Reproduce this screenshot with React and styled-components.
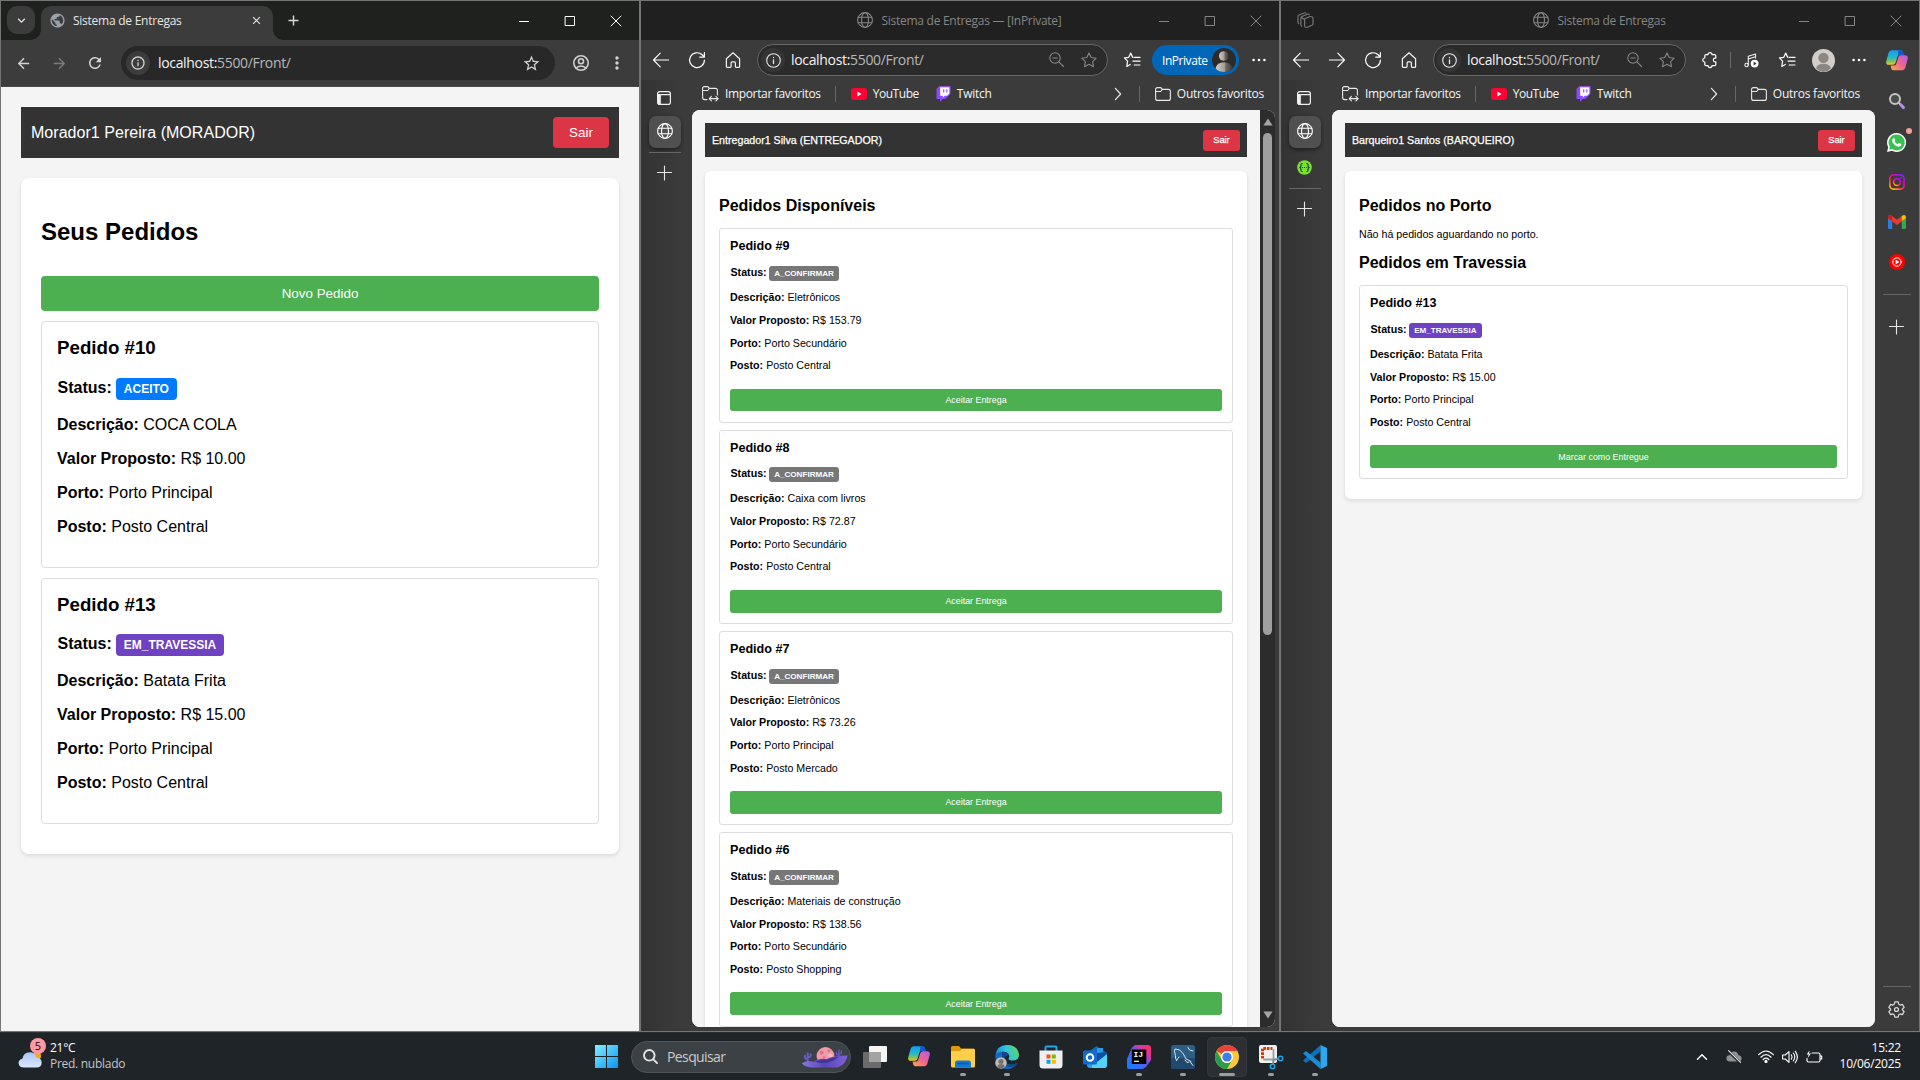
import React from "react";
import styled, { createGlobalStyle, ThemeProvider, css } from "styled-components";
import {
  MdArrowBack,
  MdArrowForward,
  MdRefresh,
  MdInfoOutline,
  MdStarBorder,
  MdMoreVert,
  MdPublic,
  MdClose,
  MdAdd,
  MdKeyboardArrowDown,
} from "react-icons/md";

const uiFont = '"Open Sans", "Noto Sans", sans-serif';
const pageFont = '"Liberation Sans", Arial, sans-serif';

const Global = createGlobalStyle`
  *, *::before, *::after { box-sizing: border-box; }
  body { margin: 0; background: #1f2327; overflow: hidden; }
`;

/* ---------- page metrics at 100% and 67% browser zoom ---------- */

const fullZoom = {
  font: 16, h2: 24, h3: 18.72, button: 13.4, badge: 12,
  pad: "20px 20px", barHeight: 51, barPad: "0 10px 0 10px", barGap: 20, barSpacing: 0.04, stroke: 0,
  exitW: 56, exitH: 31, exitFont: 13.4,
  boxPad: "0 20px 30px", boxTop: 39, h2Height: 29,
  cardPad: "15px 15px 23px", h3Height: 22, statusGap: 8.5, statusHeight: 40, row: 34, statusIndent: 0.5,
  badgeH: 22, badgePad: 7.8, badgeGap: 4.3, actionH: 35, actionGap: 0, cardGap: 10, radius: 8, small: 4,
};

const smallZoom = {
  font: 10.67, h2: 16, h3: 12.6, button: 8.9, badge: 8.1,
  pad: "13px 13px", barHeight: 34, barPad: "0 7px 0 7px", barGap: 14, barSpacing: 0, stroke: 0.25,
  exitW: 37, exitH: 21, exitFont: 9.2,
  boxPad: "0 14px 20px", boxTop: 26, h2Height: 18,
  cardPad: "10px 10px 10.5px", h3Height: 14, statusGap: 5.6, statusHeight: 27.3, row: 22.67, statusIndent: 0.5,
  badgeH: 15, badgePad: 5, badgeGap: 2.5, actionH: 22.67, actionGap: 11.8, cardGap: 6.8, radius: 6, small: 3,
};

const px = (key) => ({ theme }) => `${theme[key]}px`;

/* ---------- desktop ---------- */

const Desktop = styled.div`
  width: 1920px;
  height: 1080px;
  display: grid;
  grid-template-rows: 1032px 48px;
  font-family: ${uiFont};
  overflow: hidden;
`;

const Windows = styled.div`
  display: grid;
  grid-template-columns: repeat(3, 640px);
`;

const Window = styled.section`
  display: flex;
  flex-direction: column;
  height: 1032px;
  min-width: 0;
  border: 1px solid #757575;
  background: ${(p) => p.$bg};
  overflow: hidden;
`;

const Svg = styled.svg`
  display: block;
  flex: none;
  width: ${(p) => p.$w || 20}px;
  height: ${(p) => p.$h || p.$w || 20}px;
  fill: none;
  stroke: ${(p) => p.$c || "none"};
  stroke-width: ${(p) => p.$sw || 1.1};
  stroke-linecap: round;
  stroke-linejoin: round;
  overflow: visible;
`;

const Slot = styled.span`
  flex: none;
  width: ${(p) => p.$w || 36}px;
  height: ${(p) => (p.$h ? `${p.$h}px` : "auto")};
  display: flex;
  align-items: center;
  justify-content: center;
  color: ${(p) => p.$c || "#d4d4d4"};
`;

const Spacer = styled.span`
  flex: 1;
`;

/* ---------- generic glyphs ---------- */

const ControlsRow = styled.div`
  display: flex;
  height: 39px;
  justify-self: end;
`;

function Controls({ color }) {
  return (
    <ControlsRow>
      <Slot $w={46}><Svg $w={10} $c={color} $sw={1} viewBox="0 0 10 10"><path d="M0 5.5H10" strokeLinecap="butt" /></Svg></Slot>
      <Slot $w={46}><Svg $w={10} $c={color} $sw={1} viewBox="0 0 10 10"><path d="M.5.5h9v9h-9z" /></Svg></Slot>
      <Slot $w={46}><Svg $w={10} $c={color} $sw={1} viewBox="0 0 10 10"><path d="M0 0L10 10M10 0L0 10" /></Svg></Slot>
    </ControlsRow>
  );
}

const Globe = ({ c = "#fff", w = 16 }) => (
  <Svg $w={w} $c={c} $sw={1.1} viewBox="0 0 16 16">
    <circle cx="8" cy="8" r="7.4" />
    <ellipse cx="8" cy="8" rx="3.5" ry="7.4" />
    <path d="M1.2 5.3h13.6M1.2 10.7h13.6" />
  </Svg>
);
const BackArrow = () => <Svg $w={16} $c="#fff" viewBox="0 0 16 16"><path d="M15.6 8H.6M7.2 1.2L.5 8l6.7 6.8" /></Svg>;
const NextArrow = () => <Svg $w={16} $c="#fff" viewBox="0 0 16 16"><path d="M.4 8h15M8.8 1.2L15.5 8l-6.7 6.8" /></Svg>;
const Reload = () => <Svg $w={16} $c="#fff" $sw={1.2} viewBox="0 0 16 16"><path d="M15.4 8.2a7.4 7.4 0 1 1-2.3-5.4l2.1 2M15.4.5v4.6h-4.7" /></Svg>;
const Home = () => <Svg $w={16} $c="#f2f2f2" $sw={1.2} viewBox="0 0 16 16"><path d="M1.4 6.8L8 .8l6.6 6v7.6q0 1-1 1h-2.4q-.8 0-.8-.8v-3.7q0-1-1-1H7.1q-1 0-1 1v3.7q0 .8-.8.8H2.4q-1 0-1-1z" /></Svg>;
const Info = () => <Svg $w={15} $c="#e8e8e8" $sw={1.1} viewBox="0 0 15 15"><circle cx="7.5" cy="7.5" r="6.8" /><path d="M7.5 6.8v3.8M7.5 4.4v.3" strokeWidth="1.3" /></Svg>;
const Magnifier = () => <Svg $w={15} $c="#868686" viewBox="0 0 15 15"><circle cx="6" cy="6" r="5.2" /><path d="M9.9 9.9l4.6 4.6M3.8 6h4.4" /></Svg>;
const starPath = "M8 .9l2.2 4.6 5 .7-3.6 3.5.9 5L8 12.3l-4.5 2.4.9-5L.8 6.2l5-.7z";
const Star = () => <Svg $w={16} $c="#868686" viewBox="0 0 16 16"><path d={starPath} /></Svg>;
const StarList = () => (
  <Svg $w={16} $c="#fff" $sw={1.2} viewBox="0 0 16 16">
    <path d="M8.6 5.2L6.7 1.1 4.8 5.3l-4.3.6 3.1 3.2-.8 5.3 3.4-2M10.2 5.4H16M9 9.2h7M10.2 13H16M6.7 1.1L8.8 5.3" />
  </Svg>
);
const Dots = () => <Svg $w={14} $h={4} viewBox="0 0 14 4"><g fill="#fff"><circle cx="1.6" cy="2" r="1.3" /><circle cx="7" cy="2" r="1.3" /><circle cx="12.4" cy="2" r="1.3" /></g></Svg>;
const Plus = () => <Svg $w={14} $c="#e6e6e6" $sw={1.1} viewBox="0 0 14 14"><path d="M6.5 0v14M-.5 6.5h14" /></Svg>;
const TabsIcon = () => <Svg $w={14} $c="#efefef" $sw={1.2} viewBox="1 0 14 14"><rect x=".6" y=".6" width="12.8" height="12.8" rx="2.2" /><path d="M.6 3.6h12.8" /><path d="M.8 3.6h2.8v9.7H2q-1.2 0-1.2-1.2z" fill="#efefef" strokeWidth=".6" /></Svg>;
const Folder = () => <Svg $w={16} $h={14} $c="#e8e8e8" viewBox="0 0 16 14"><path d="M.6 2.6q0-2 2-2h2.8q.8 0 1.2.8l.6 1h6.2q2 0 2 2v7q0 2-2 2H2.6q-2 0-2-2zM.8 4.5h3.9q.9 0 1.5-.7l1-1.3" /></Svg>;
const FolderImport = () => (
  <Svg $w={17} $h={15} $c="#e8e8e8" viewBox="0 0 17 15">
    <path d="M5 13.6H2.6q-2 0-2-2v-9q0-2 2-2h2.8q.8 0 1.2.8l.6 1h6.2q2 0 2 2V9M.8 4.5h3.9q.9 0 1.5-.7l1-1.3M7.4 12.6h8.4M9.4 10.4l-2.2 2.2 2.2 2.2M13.9 10.4l2.2 2.2-2.2 2.2" />
  </Svg>
);
const ChevronRight = () => <Svg $w={6} $h={12} $c="#e8e8e8" $sw={1.2} viewBox="0 0 6 12"><path d="M.4.3L5.6 6 .4 11.7" /></Svg>;
const YouTube = () => <Svg $w={16} $h={12} viewBox="0 0 16 12"><rect width="16" height="12" rx="3" fill="#ff0033" /><path d="M6.4 3.6v4.8L10.6 6z" fill="#fff" /></Svg>;
const Twitch = () => (
  <Svg $w={15} $h={16} viewBox="0 0 15 16">
    <path d="M3.4 0L.5 2.9v10.2H4V16l2.9-2.9h2.4l5.2-5.2V0z" fill="#9147ff" />
    <path d="M4.2 1.2h9.2v6.2l-2.3 2.3H8.8l-2 2v-2H4.2z" fill="#fff" />
    <path d="M7.2 3.2h1.1v3.4H7.2zM10.3 3.2h1.1v3.4h-1.1z" fill="#9147ff" />
  </Svg>
);
const Puzzle = () => <Svg $w={16} $c="#fff" $sw={1.2} viewBox="0 0 16 16"><path d="M6 2.6a2 2 0 0 1 4 0h2.600q1.200 0 1.200 1.200v2.300h-.6a1.900 1.900 0 0 0 0 3.800h.6v2.500q0 1.200-1.200 1.200H10a2 2 0 0 1-4 0H4q-1.200 0-1.200-1.200V10a2 2 0 0 1 0-4V3.800q0-1.200 1.200-1.200z" /></Svg>;
const Music = () => (
  <Svg $w={15} $c="#f0f0f0" viewBox="0 0 15 15">
    <circle cx="2.6" cy="12" r="1.7" /><path d="M4.3 12V3.3L11.5 1v4M4.3 6l7.2-2.3" /><circle cx="10.6" cy="10.6" r="3.9" fill="#fff" stroke="none" /><path d="M9.6 8.7v3.8l3.1-1.9z" fill="#3b3b3b" stroke="none" />
  </Svg>
);
const Avatar = ({ w = 22, bg = "#d2cfca", fg = "#8c8782" }) => (
  <Svg $w={w} viewBox="0 0 24 24">
    <circle cx="12" cy="12" r="12" fill={bg} /><circle cx="12" cy="9.2" r="5.4" fill={fg} /><path d="M4.2 20.2q1.2-4.7 7.8-4.7t7.8 4.7A12 12 0 0 1 12 24a12 12 0 0 1-7.8-3.8z" fill={fg} />
  </Svg>
);
const PrivateAvatar = () => (
  <Svg $w={24} viewBox="0 0 24 24">
    <defs><linearGradient id="pa"><stop stopColor="#d5d0c8" /><stop offset=".55" stopColor="#a09a92" /><stop offset=".6" stopColor="#6f6a66" /><stop offset="1" stopColor="#3f3c3a" /></linearGradient></defs>
    <circle cx="12" cy="12" r="12" fill="#2d2b2a" /><circle cx="11.8" cy="8" r="4.8" fill="url(#pa)" /><path d="M3.5 20.4Q5 14.2 12 14.2t8.4 6.2A12 12 0 0 1 12 24a12 12 0 0 1-8.5-3.6z" fill="url(#pa)" />
  </Svg>
);
const Copilot = ({ w = 22, id }) => (
  <Svg $w={w} $h={w * 0.93} viewBox="0 0 24 22">
    <defs>
      <linearGradient id={`${id}a`} x1="0" y1="0" x2="0" y2="1"><stop stopColor="#129df0" /><stop offset=".5" stopColor="#24b8c8" /><stop offset=".8" stopColor="#8bc34a" /><stop offset="1" stopColor="#f6c433" /></linearGradient>
      <linearGradient id={`${id}b`} x1="1" y1="0" x2="0" y2="1"><stop stopColor="#b05bf5" /><stop offset=".5" stopColor="#f0638d" /><stop offset="1" stopColor="#ffa94a" /></linearGradient>
    </defs>
    <path d="M6.5 0h9q2 0 2.8 2.1l.9 3H15q-2 0-2.600 2l-2 6.600q-.7 2.300-3 2.300H3.400q-4.100 0-3.100-4L2.700 3.400Q3.600 0 6.500 0z" fill={`url(#${id}a)`} />
    <path d="M13.500 0h2.200q2 0 2.600 2.100l.9 3h-4q-1.700 0-2.300 1.600z" fill="#1554d1" />
    <path d="M17.500 22h-9q-2 0-2.800-2.100L5 16.800h3.500q2 0 2.700-2l2.200-7.100q.7-2.200 3-2.200h4q4.200 0 3.300 4l-2.400 9q-.9 3.500-3.800 3.500z" fill={`url(#${id}b)`} />
  </Svg>
);

/* ---------- Chrome ---------- */

const ChromeTabs = styled.header`
  display: grid;
  grid-template-columns: auto auto auto 1fr;
  height: 39px;
  padding-left: 6px;
  background: #1f211f;
`;
const TabSearch = styled.button`
  width: 28px;
  height: 28px;
  margin: 5px 6px 0 0;
  padding: 0;
  display: grid;
  place-items: center;
  border: 0;
  border-radius: 10px;
  background: #3c3c3c;
  color: #e6e6e6;
`;
const ChromeTab = styled.div`
  position: relative;
  width: 232px;
  height: 34px;
  margin-top: 5px;
  padding: 0 10px 6px 8px;
  display: flex;
  align-items: center;
  border-radius: 10px 10px 0 0;
  background: #3c3c3c;
  color: #e6e6e6;
  font-size: 12px;
  letter-spacing: -0.25px;
  &::before, &::after {
    content: "";
    position: absolute;
    bottom: 0;
    width: 10px;
    height: 10px;
  }
  &::before { left: -10px; background: radial-gradient(circle at 0 0, transparent 9.5px, #3c3c3c 10px); }
  &::after { right: -10px; background: radial-gradient(circle at 100% 0, transparent 9.5px, #3c3c3c 10px); }
  span { margin-left: 7px; flex: 1; white-space: nowrap; }
`;
const NewTab = styled.span`
  width: 40px;
  height: 38px;
  display: grid;
  place-items: center;
  color: #d9d9d9;
`;
const ChromeBar = styled.nav`
  height: 47px;
  flex: none;
  display: flex;
  align-items: center;
  padding: 0 4px;
  background: #3c3c3c;
  border-bottom: 1px solid #4a4a4a;
`;
const Omnibox = styled.div`
  flex: 1;
  height: 34px;
  margin: 0 8px;
  padding: 0 14px 0 5px;
  display: flex;
  align-items: center;
  gap: 8px;
  border-radius: 17px;
  background: #282828;
  color: #d0d0d0;
`;
const InfoDot = styled.span`
  width: 24px;
  height: 24px;
  display: grid;
  place-items: center;
  border-radius: 50%;
  background: ${(p) => p.$bg};
`;
const Url = styled.span`
  flex: 1;
  padding-bottom: 1px;
  color: #b8b8b8;
  font-size: 14px;
  letter-spacing: -0.33px;
  white-space: nowrap;
  b { font-weight: 400; color: #f3f3f3; }
`;

/* ---------- Edge ---------- */

const EdgeTitle = styled.header`
  flex: none;
  height: 39px;
  display: grid;
  grid-template-columns: 1fr auto 1fr;
  align-items: center;
  background: #202020;
  color: #858585;
  font-size: 12px;
`;
const Caption = styled.div`
  display: flex;
  align-items: center;
  gap: 8px;
  padding: 0 1px 1px 0;
  letter-spacing: -0.27px;
  white-space: nowrap;
`;
const WorkspaceSlot = styled.span`
  padding-left: 16px;
`;
const EdgeBar = styled.nav`
  flex: none;
  height: 40px;
  display: flex;
  align-items: center;
  padding: 0 2px;
`;
const AddressPill = styled.div`
  flex: ${(p) => (p.$w ? "none" : 1)};
  width: ${(p) => (p.$w ? `${p.$w}px` : "auto")};
  height: 32px;
  margin: 0 6px;
  padding: 0 10px 0 3px;
  display: flex;
  align-items: center;
  gap: 6px;
  border: 1px solid #666;
  border-radius: 16px;
  background: #2b2b2b;
`;
const PillIcons = styled.span`
  display: flex;
  gap: 17px;
`;
const InPrivate = styled.div`
  width: 87px;
  height: 30px;
  margin: 0 2px;
  padding: 0 3px 0 10px;
  display: flex;
  align-items: center;
  justify-content: space-between;
  border-radius: 15px;
  background: #0067b8;
  color: #fff;
  font-size: 12px;
  letter-spacing: -0.45px;
`;
const Divider = styled.span`
  flex: none;
  width: 1px;
  height: 16px;
  background: #666;
`;
const EdgeBody = styled.div`
  flex: 1;
  min-height: 0;
  display: grid;
  grid-template-columns: 51px minmax(0, 1fr) ${(p) => p.$side}px;
  grid-template-rows: minmax(0, 1fr);
`;
const Strip = styled.aside`
  display: flex;
  flex-direction: column;
  align-items: center;
  padding: 9px 4px 0 0;
  background: linear-gradient(90deg, #333 0, #3b3b3b 40px);
`;
const ActiveTab = styled.span`
  width: 32px;
  height: 32px;
  margin: 9px 0 4px;
  padding-bottom: 2px;
  display: grid;
  place-items: center;
  border-radius: 7px;
  background: #505050;
  box-shadow: 0 2px 4px rgba(0, 0, 0, 0.45);
`;
const HLine = styled.span`
  width: ${(p) => p.$w || 32}px;
  height: 1px;
  flex: none;
  background: #666;
`;
const EdgeMain = styled.div`
  display: grid;
  grid-template-rows: 30px minmax(0, 1fr);
  min-height: 0;
  padding-bottom: 4px;
`;
const Bookmarks = styled.div`
  display: flex;
  align-items: center;
  padding: 0 ${(p) => p.$right}px 3px 10px;
  color: #f5f5f5;
  font-size: 12px;
  white-space: nowrap;
`;
const Bookmark = styled.span`
  display: flex;
  align-items: center;
  gap: 6px;
  letter-spacing: ${(p) => p.$ls}px;
`;
const Gap = styled.span`
  flex: none;
  width: ${(p) => p.$w}px;
`;
const Viewport = styled.div`
  display: flex;
  min-height: 0;
  border-radius: 8px;
  overflow: hidden;
  background: #f4f4f4;
`;
const Scrollbar = styled.div`
  width: 15px;
  flex: none;
  display: flex;
  flex-direction: column;
  align-items: center;
  padding: 8px 0;
  background: #2c2c2c;
`;
const Thumb = styled.div`
  width: 9px;
  height: 502px;
  margin-top: 7px;
  border-radius: 5px;
  background: #9f9f9f;
`;
const SideBar = styled.aside`
  display: flex;
  flex-direction: column;
  align-items: center;
  padding-right: 1px;
`;
const SideItem = styled.span`
  position: relative;
  height: ${(p) => p.$h || 40}px;
  flex: none;
  display: grid;
  place-items: center;
`;
const Notice = styled.i`
  position: absolute;
  top: 6px;
  right: -6px;
  width: 6px;
  height: 6px;
  border-radius: 50%;
  background: #f5a19b;
`;

/* ---------- site ---------- */

const Page = styled.main`
  flex: 1;
  min-width: 0;
  min-height: 0;
  overflow: hidden;
  padding: ${({ theme }) => theme.pad};
  background: #f4f4f4;
  color: #000;
  font-family: ${pageFont};
  font-size: ${px("font")};
`;
const UserBar = styled.div`
  height: ${px("barHeight")};
  display: flex;
  align-items: center;
  justify-content: space-between;
  padding: ${({ theme }) => theme.barPad};
  margin-bottom: ${px("barGap")};
  background: #333;
  color: #fff;
  letter-spacing: ${px("barSpacing")};
  -webkit-text-stroke: ${px("stroke")} #fff;
`;
const Exit = styled.button`
  width: ${px("exitW")};
  height: ${px("exitH")};
  padding: 0;
  border: 0;
  border-radius: ${px("small")};
  background: #dc3545;
  color: #fff;
  font: ${({ theme }) => `400 ${theme.exitFont}px ${pageFont}`};
`;
const Box = styled.section`
  padding: ${({ theme }) => theme.boxPad};
  padding-top: ${px("boxTop")};
  border-radius: ${px("radius")};
  background: #fff;
  box-shadow: 0 2px 4px rgba(0, 0, 0, 0.1);
`;
const Heading = styled.h2`
  height: ${px("h2Height")};
  line-height: ${px("h2Height")};
  margin: 0 0 ${(p) => p.$mb}px;
  font-size: ${px("h2")};
  white-space: nowrap;
`;
const Note = styled.p`
  height: 14px;
  line-height: 14px;
  margin: 0 0 13px;
  font-size: 10.67px;
`;
const Action = styled.button`
  display: block;
  width: 100%;
  height: ${px("actionH")};
  padding: 0;
  margin-top: ${(p) => (p.$inCard ? `${p.theme.actionGap}px` : 0)};
  border: 0;
  border-radius: ${px("small")};
  background: #4caf50;
  color: #fff;
  font: ${({ theme }) => `400 ${theme.button}px ${pageFont}`};
`;
const Cards = styled.div`
  display: grid;
  gap: ${px("cardGap")};
  margin-top: ${(p) => p.$mt || 0}px;
`;
const Card = styled.article`
  padding: ${({ theme }) => theme.cardPad};
  border: 1px solid #ddd;
  border-radius: ${px("small")};
  background: #fff;
`;
const CardTitle = styled.h3`
  height: ${px("h3Height")};
  line-height: ${px("h3Height")};
  margin: 0 0 ${px("statusGap")};
  font-size: ${px("h3")};
`;
const Field = styled.div`
  height: ${px("row")};
  line-height: ${px("row")};
  white-space: nowrap;
`;
const StatusField = styled(Field)`
  height: ${px("statusHeight")};
  display: flex;
  align-items: center;
  padding-left: ${px("statusIndent")};
`;
const tones = { A_CONFIRMAR: "#777", ACEITO: "#007bff", EM_TRAVESSIA: "#6f42c1" };
const Badge = styled.span`
  height: ${px("badgeH")};
  line-height: ${px("badgeH")};
  margin: 2px 0 0 ${px("badgeGap")};
  padding: 0 ${px("badgePad")};
  border-radius: ${px("small")};
  background: ${(p) => tones[p.$status]};
  color: #fff;
  font-size: ${px("badge")};
  font-weight: 700;
`;

function Order({ id, status, desc, price, port, post, action }) {
  return (
    <Card>
      <CardTitle>Pedido #{id}</CardTitle>
      <StatusField><b>Status:</b><Badge $status={status}>{status}</Badge></StatusField>
      <Field><b>Descrição:</b> {desc}</Field>
      <Field><b>Valor Proposto:</b> R$ {price}</Field>
      <Field><b>Porto:</b> {port}</Field>
      <Field><b>Posto:</b> {post}</Field>
      {action && <Action $inCard>{action}</Action>}
    </Card>
  );
}

const available = [
  { id: 9, desc: "Eletrônicos", price: "153.79", port: "Porto Secundário", post: "Posto Central" },
  { id: 8, desc: "Caixa com livros", price: "72.87", port: "Porto Secundário", post: "Posto Central" },
  { id: 7, desc: "Eletrônicos", price: "73.26", port: "Porto Principal", post: "Posto Mercado" },
  { id: 6, desc: "Materiais de construção", price: "138.56", port: "Porto Secundário", post: "Posto Shopping" },
];

function ChromeWindow() {
  return (
    <Window $bg="#f4f4f4">
      <ChromeTabs>
        <TabSearch><MdKeyboardArrowDown size={15} /></TabSearch>
        <ChromeTab>
          <MdPublic size={17} color="#9aa0a8" />
          <span>Sistema de Entregas</span>
          <MdClose size={13} />
        </ChromeTab>
        <NewTab><MdAdd size={17} /></NewTab>
        <Controls color="#fff" />
      </ChromeTabs>
      <ChromeBar>
        <Slot><MdArrowBack size={17} /></Slot>
        <Slot $c="#7c7c7c"><MdArrowForward size={17} /></Slot>
        <Slot><MdRefresh size={18} /></Slot>
        <Omnibox>
          <InfoDot $bg="#3c3c3c"><MdInfoOutline size={16} /></InfoDot>
          <Url><b>localhost:</b>5500/Front/</Url>
          <MdStarBorder size={19} />
        </Omnibox>
        <Slot>
          <Svg $w={16} $c="#cfcfcf" $sw={1.6} viewBox="0 0 16 16"><circle cx="8" cy="8" r="7.2" /><circle cx="8" cy="6.3" r="2.5" /><path d="M3.2 13q4.8-4 9.6 0" /></Svg>
        </Slot>
        <Slot><MdMoreVert size={20} /></Slot>
      </ChromeBar>
      <ThemeProvider theme={fullZoom}>
        <Page>
          <UserBar>Morador1 Pereira (MORADOR)<Exit>Sair</Exit></UserBar>
          <Box>
            <Heading $mb={30}>Seus Pedidos</Heading>
            <Action>Novo Pedido</Action>
            <Cards $mt={10}>
              <Order id={10} status="ACEITO" desc="COCA COLA" price="10.00" port="Porto Principal" post="Posto Central" />
              <Order id={13} status="EM_TRAVESSIA" desc="Batata Frita" price="15.00" port="Porto Principal" post="Posto Central" />
            </Cards>
          </Box>
        </Page>
      </ThemeProvider>
    </Window>
  );
}

function BookmarkBar({ right }) {
  return (
    <Bookmarks $right={right}>
      <Bookmark $ls={-0.35}><FolderImport />Importar favoritos</Bookmark>
      <Gap $w={14} />
      <Divider />
      <Gap $w={15} />
      <Bookmark $ls={-0.45}><YouTube />YouTube</Bookmark>
      <Gap $w={17} />
      <Bookmark $ls={-0.25}><Twitch />Twitch</Bookmark>
      <Spacer />
      <ChevronRight />
      <Gap $w={18} />
      <Divider />
      <Gap $w={15} />
      <Bookmark $ls={-0.24}><Folder />Outros favoritos</Bookmark>
    </Bookmarks>
  );
}

function Address({ w }) {
  return (
    <AddressPill $w={w}>
      <InfoDot $bg="#353535"><Info /></InfoDot>
      <Url><b>localhost:</b>5500/Front/</Url>
      <PillIcons><Magnifier /><Star /></PillIcons>
    </AddressPill>
  );
}

function InPrivateWindow() {
  return (
    <Window $bg="#3b3b3b">
      <EdgeTitle>
        <span />
        <Caption><Globe c="#858585" />Sistema de Entregas — [InPrivate]</Caption>
        <Controls color="#858585" />
      </EdgeTitle>
      <EdgeBar>
        <Slot><BackArrow /></Slot>
        <Slot><Reload /></Slot>
        <Slot><Home /></Slot>
        <Address />
        <Slot><StarList /></Slot>
        <InPrivate>InPrivate<PrivateAvatar /></InPrivate>
        <Slot><Dots /></Slot>
      </EdgeBar>
      <EdgeBody $side={4}>
        <Strip>
          <Slot $h={18}><TabsIcon /></Slot>
          <ActiveTab><Globe /></ActiveTab>
          <HLine />
          <SideItem><Plus /></SideItem>
        </Strip>
        <EdgeMain>
          <BookmarkBar right={11} />
          <Viewport>
            <ThemeProvider theme={smallZoom}>
              <Page>
                <UserBar>Entregador1 Silva (ENTREGADOR)<Exit>Sair</Exit></UserBar>
                <Box>
                  <Heading $mb={13.3}>Pedidos Disponíveis</Heading>
                  <Cards>
                    {available.map((o) => <Order key={o.id} {...o} status="A_CONFIRMAR" action="Aceitar Entrega" />)}
                  </Cards>
                </Box>
              </Page>
            </ThemeProvider>
            <Scrollbar>
              <Svg $w={10} $h={8} viewBox="0 0 10 8"><path d="M5 .4L9.6 7.6H.4z" fill="#a5a5a5" /></Svg>
              <Thumb />
              <Spacer />
              <Svg $w={10} $h={8} viewBox="0 0 10 8"><path d="M5 7.6L9.6.4H.4z" fill="#a5a5a5" /></Svg>
            </Scrollbar>
          </Viewport>
        </EdgeMain>
        <span />
      </EdgeBody>
    </Window>
  );
}

const Search3D = () => (
  <Svg $w={16} viewBox="0 0 16 16"><circle cx="6" cy="6" r="5" stroke="#c4c4c4" strokeWidth="2" fill="#4b4b4b" /><path d="M9.8 9.8l1.4 1.4" stroke="#c4c4c4" strokeWidth="2" /><path d="M11.8 11.8l2.6 2.8" stroke="#b48ef0" strokeWidth="3" /></Svg>
);
const WhatsApp = () => (
  <Svg $w={19} viewBox="0 0 20 20"><path d="M10 0a10 10 0 0 0-8.700 14.900L0 20l5.200-1.300A10 10 0 1 0 10 0z" fill="#fff" /><path d="M10 1.700a8.300 8.300 0 0 0-7 12.700l-.7 3.200 3.300-.8A8.300 8.300 0 1 0 10 1.700z" fill="#3ac251" /><path d="M6.800 5.300q.9-.5 1.300.5l.6 1.600q0 .5-.8 1.400 1.200 2.200 3.300 3.100l1-1.200q.3-.4.8-.1l1.800.9q.6.4 0 1.500-1 1.700-3.100 1.300-4.600-1.200-6.200-5.400-.5-2.200 1.300-3.600z" fill="#fff" /></Svg>
);
const Instagram = () => (
  <Svg $w={16} viewBox="0 0 16 16">
    <defs><linearGradient id="ig" x1=".1" y1="1" x2=".8" y2="0"><stop stopColor="#ffc100" /><stop offset=".35" stopColor="#ff3a3a" /><stop offset=".7" stopColor="#e800a8" /><stop offset="1" stopColor="#8a1cff" /></linearGradient></defs>
    <g stroke="url(#ig)" strokeWidth="1.6"><rect x=".9" y=".9" width="14.2" height="14.2" rx="3.6" /><circle cx="8" cy="8" r="3.4" /></g><circle cx="12" cy="4" r=".9" fill="#d800d0" />
  </Svg>
);
const Gmail = () => (
  <Svg $w={18} $h={14} viewBox="0 0 18 14"><path d="M0 3v9.700Q0 14 1.300 14H4.200V5z" fill="#2a7de1" /><path d="M18 3v9.700q0 1.300-1.300 1.300h-2.900V5z" fill="#34a853" /><path d="M0 3.200V2.100Q0 0 2 0q.8 0 1.600.6L9 4.800 14.400.6l-.6 5.600L9 10 0 3.200z" fill="#ea3a30" /><path d="M13.800 6V1l.7-.5Q15.200 0 16.200 0 18 .2 18 2.300v1z" fill="#fbbc04" /><path d="M0 3.200V2.100Q0 0 2 0q1.100 0 2.200 1v5.300z" fill="#c5221f" /></Svg>
);
const YTMusic = () => <Svg $w={16} viewBox="0 0 16 16"><circle cx="8" cy="8" r="8" fill="#f00" /><circle cx="8" cy="8" r="4.200" stroke="#fff" strokeWidth="1" /><path d="M6.600 5.600v4.800L10.500 8z" fill="#fff" /></Svg>;
const Gear = () => (
  <Svg $w={17} $c="#d8d8d8" $sw={1.3} viewBox="0 0 18 18">
    <path d="M7.200 1h3.600l.6 2.500 1.400.8 2.400-.7 1.900 3.100L15.300 8.500v1L17.100 11.300l-1.900 3.100-2.400-.7-1.400.8-.6 2.500H7.200l-.6-2.500-1.400-.8-2.400.7L.9 11.300 2.700 9.500v-1L.9 6.700l1.900-3.100 2.400.7 1.400-.8z" /><circle cx="9" cy="9" r="2.100" />
  </Svg>
);
const Workspaces = () => (
  <Svg $w={17} $c="#7a7a7a" viewBox="0 0 17 17"><path d="M7.600 6.800l5.600-2.200q1-.4 2 .3.800.6.800 1.500v5.400q0 1.100-1.100 1.500l-4.700 2q-1 .4-1.900-.2-.7-.5-.7-1.400zM4.600 14.200l-.3-.3q-.4-.5-.4-1.200V6q0-1 1-1.500l5.500-2.200q1.200-.4 2 .3M4.200 5.200l3.400 2.300M1.900 11.700l-.4-.4q-.5-.5-.5-1.300V4.300q0-1 1-1.400L7 .9q1.200-.4 2 .3" /></Svg>
);
const Swagger = () => (
  <Svg $w={15} viewBox="0 0 15 15"><circle cx="7.500" cy="7.500" r="7.300" fill="#7be22c" /><path d="M5.200 3.500q-1.500 0-1.200 1.900.2 1.600-1.200 2.100 1.400.5 1.200 2.100-.3 1.900 1.200 1.900M9.800 3.500q1.500 0 1.200 1.900-.2 1.600 1.200 2.100-1.400.5-1.200 2.100.3 1.900-1.200 1.900" stroke="#173647" strokeWidth="1.100" /><path d="M5.300 7.500h4.500" stroke="#173647" strokeWidth="1.200" strokeDasharray=".1 2.100" /></Svg>
);

function EdgeWindow() {
  return (
    <Window $bg="#3b3b3b">
      <EdgeTitle>
        <WorkspaceSlot><Workspaces /></WorkspaceSlot>
        <Caption><Globe c="#858585" />Sistema de Entregas</Caption>
        <Controls color="#858585" />
      </EdgeTitle>
      <EdgeBar>
        <Slot><BackArrow /></Slot>
        <Slot><NextArrow /></Slot>
        <Slot><Reload /></Slot>
        <Slot><Home /></Slot>
        <Address w={253} />
        <Slot><Puzzle /></Slot>
        <Gap $w={2} /><Divider /><Gap $w={2} />
        <Slot><Music /></Slot>
        <Slot><StarList /></Slot>
        <Slot><Avatar w={23} /></Slot>
        <Slot><Dots /></Slot>
        <Spacer />
        <Slot $w={40}><Copilot w={22} id="ec" /></Slot>
      </EdgeBar>
      <EdgeBody $side={44}>
        <Strip>
          <Slot $h={18}><TabsIcon /></Slot>
          <ActiveTab><Globe /></ActiveTab>
          <SideItem $h={30}><Swagger /></SideItem>
          <SideItem $h={6} />
          <HLine />
          <SideItem><Plus /></SideItem>
        </Strip>
        <EdgeMain>
          <BookmarkBar right={15} />
          <Viewport>
            <ThemeProvider theme={smallZoom}>
              <Page>
                <UserBar>Barqueiro1 Santos (BARQUEIRO)<Exit>Sair</Exit></UserBar>
                <Box>
                  <Heading $mb={11.5}>Pedidos no Porto</Heading>
                  <Note>Não há pedidos aguardando no porto.</Note>
                  <Heading $mb={13.5}>Pedidos em Travessia</Heading>
                  <Cards>
                    <Order id={13} status="EM_TRAVESSIA" desc="Batata Frita" price="15.00" port="Porto Principal" post="Posto Central" action="Marcar como Entregue" />
                  </Cards>
                </Box>
              </Page>
            </ThemeProvider>
          </Viewport>
        </EdgeMain>
        <SideBar>
          <SideItem $h={42}><Search3D /></SideItem>
          <SideItem><WhatsApp /><Notice /></SideItem>
          <SideItem><Instagram /></SideItem>
          <SideItem><Gmail /></SideItem>
          <SideItem><YTMusic /></SideItem>
          <SideItem $h={12} />
          <HLine $w={28} />
          <SideItem $h={64}><Plus /></SideItem>
          <Spacer />
          <HLine $w={28} />
          <SideItem $h={44}><Gear /></SideItem>
        </SideBar>
      </EdgeBody>
    </Window>
  );
}

/* ---------- taskbar ---------- */

const Taskbar = styled.footer`
  display: grid;
  grid-template-columns: 585px auto 1fr;
  height: 48px;
  background: #1f2428;
  border-top: 1px solid #2c3033;
  color: #fff;
`;
const Weather = styled.div`
  display: flex;
  align-items: center;
  padding-left: 18px;
  gap: 7px;
  font-size: 12px;
`;
const WeatherIcon = styled.span`
  position: relative;
  display: block;
  width: 25px;
  padding: 6px 0 0;
`;
const Count = styled.span`
  position: absolute;
  top: -7px;
  left: 12px;
  width: 16px;
  height: 16px;
  border-radius: 50%;
  background: #ff99a4;
  color: #111;
  font-size: 11px;
  line-height: 16px;
  text-align: center;
`;
const TwoLines = styled.div`
  display: flex;
  flex-direction: column;
  padding-bottom: 1px;
  line-height: 16px;
  font-size: 12px;
  letter-spacing: ${(p) => p.$ls || 0}px;
  text-align: ${(p) => p.$align || "left"};
  small { font-size: 12px; color: ${(p) => p.$sub || "#fff"}; }
`;
const Pins = styled.div`
  display: flex;
  align-items: center;
`;
const Pin = styled.span`
  position: relative;
  width: 40px;
  height: 40px;
  margin: 0 2px;
  display: grid;
  place-items: center;
  border-radius: 5px;
  ${(p) => p.$active && css`background: #2c3034; box-shadow: inset 0 0 0 1px #34383c;`}
  ${(p) => p.$open && css`
    &::after {
      content: "";
      position: absolute;
      bottom: 1px;
      left: 50%;
      width: ${p.$active ? 16 : 6}px;
      height: 3px;
      margin-left: ${p.$active ? -8 : -3}px;
      border-radius: 2px;
      background: #9d9d9a;
    }
  `}
`;
const StartPin = styled(Pin)`
  margin: 0 3px 0 1px;
`;
const SearchBox = styled.div`
  width: 220px;
  height: 32px;
  margin: 0 2px;
  padding: 0 2px 0 11px;
  display: flex;
  align-items: center;
  gap: 9px;
  border: 1px solid #505458;
  border-radius: 16px;
  background: #3c4145;
  color: #c9cbcc;
  font-size: 14px;
  letter-spacing: -0.6px;
`;
const Tray = styled.div`
  display: flex;
  align-items: center;
  justify-content: flex-end;
  padding-right: 19px;
`;

const Scene = () => (
  <Svg $w={47} $h={24} viewBox="0 0 48 25">
    <defs>
      <linearGradient id="hill" x2="1"><stop stopColor="#8a76e0" /><stop offset=".5" stopColor="#5846b4" /><stop offset="1" stopColor="#7d62dc" /></linearGradient>
    </defs>
    <circle cx="25" cy="11.500" r="9.300" fill="#f39aa9" /><circle cx="21" cy="8" r="2" fill="#d9748a" /><circle cx="28.500" cy="6" r="1.600" fill="#d9748a" /><circle cx="30" cy="11" r="2" fill="#fbb9c0" /><circle cx="23.500" cy="13" r="1.400" fill="#d9748a" />
    <path d="M6.500 19V8.500M3.600 11v2q0 1.500 2.900 1.500M9.500 9.500v2q0 1.500-3 1.500" stroke="#6a58c9" strokeWidth="2" />
    <path d="M39 13V5M36.500 7.500v1.500q0 1.300 2.500 1.300M41.500 6.500V8q0 1.300-2.500 1.300" stroke="#6a58c9" strokeWidth="1.300" />
    <path d="M.5 19q6-3.500 12-1.500 6-4.500 13-2.500 8-4.500 22.500-4-1 8.500-10 12.500H11q-8-.5-10.500-4.500z" fill="url(#hill)" /><path d="M14 17.500q7-3 12-2.500 7-2 13-3-5 5-13 6.500-6 1-12-1z" fill="#43349a" />
  </Svg>
);

const WindowsLogo = () => (
  <Svg $w={23} viewBox="0 0 23 23">
    <defs><linearGradient id="win" x1="0" y1="0" x2="23" y2="23" gradientUnits="userSpaceOnUse"><stop stopColor="#7ff0ff" /><stop offset="1" stopColor="#0a93f5" /></linearGradient></defs>
    <path d="M0 0h11v11H0zM12 0h11v11H12zM0 12h11v11H0zM12 12h11v11H12z" fill="url(#win)" />
  </Svg>
);
const TaskView = () => (
  <Svg $w={24} $h={22} viewBox="0 0 24 22"><rect x="6" width="18" height="16" rx="1" fill="#f4f4f4" /><rect y="6" width="18" height="16" rx="1" fill="#6b6b6b" /><path d="M6 6h12v10H6z" fill="#a3a3a3" /></Svg>
);
const Explorer = () => (
  <Svg $w={24} $h={22} viewBox="0 0 24 22"><path d="M0 5V1.500Q0 0 1.500 0H8l2 2.500h12.500Q24 2.500 24 4v3z" fill="#dd9a0d" /><path d="M0 5h9l2-2h11.500Q24 3 24 4.500V20q0 1.500-1.500 1.500h-21Q0 21.500 0 20z" fill="#ffcf48" /><path d="M4 21.500V17q0-2.500 2.500-2.500h11q2.500 0 2.500 2.500v4.500z" fill="#1379cf" /><path d="M7 17.500h10" stroke="#0c5aa6" strokeWidth="1.500" /></Svg>
);
const EdgeLogo = () => (
  <Svg $w={24} viewBox="0 0 24 24">
    <defs><linearGradient id="eg" x1="0" y1=".6" x2="1" y2=".3"><stop stopColor="#1683d8" /><stop offset=".5" stopColor="#31c3e0" /><stop offset="1" stopColor="#5fdc5a" /></linearGradient></defs>
    <path d="M.3 11Q1.500 0 12 0t12 9.500q-.2 6-6 6-4.500 0-4.500-2 1.500-2 0-4.500Q11 6 7 7 2 8 .3 11z" fill="url(#eg)" />
    <path d="M.2 10.500Q3 6.500 7.500 6.800 6 14 10 17.500q5 4 12.500.5Q18.500 24 12 24 1 23.500.2 10.500z" fill="#1468c0" /><path d="M7.500 6.800Q12 7 13.500 10q-5 1-3.500 6.500t12.500 1.500Q20 22 15 22 5 21 7.500 6.800z" fill="#0c4a94" />
    <circle cx="6" cy="18" r="5.800" fill="#bdb9b5" /><circle cx="6" cy="16.500" r="2.500" fill="#77736f" /><path d="M2.200 22q.5-3 3.800-3t3.800 3q-3.800 2.800-7.600 0z" fill="#77736f" />
  </Svg>
);
const Store = () => (
  <Svg $w={24} viewBox="0 0 24 24"><path d="M6.500 6V2.500Q6.500 1.500 7.500 1.500h9q1 0 1 1V6" stroke="#23a6e8" strokeWidth="2" /><path d="M.5 5.500h23V20q0 3.500-3.500 3.500H4Q.5 23.500.5 20z" fill="#f0efef" /><path d="M7.500 9.500h4v4h-4z" fill="#f25022" /><path d="M12.800 9.500h4v4h-4z" fill="#7fba00" /><path d="M7.500 14.800h4v4h-4z" fill="#00a4ef" /><path d="M12.800 14.800h4v4h-4z" fill="#ffb900" /></Svg>
);
const LogoText = styled.text`
  font: 700 ${(p) => p.$s}px "Liberation Mono", monospace;
  fill: #fff;
  stroke: none;
`;
const Outlook = () => (
  <Svg $w={24} viewBox="0 0 24 24"><path d="M4 8L13.500 1 24 8v2L13.500 16z" fill="#1566b8" /><path d="M14 3h6v8h-6z" fill="#2b9be8" /><path d="M4 9l20-1v12q0 3-3 3H7q-3 0-3-3z" fill="#2a9fe4" /><path d="M24 9L9 20v3h12q3 0 3-3z" fill="#5ad9fb" opacity=".85" /><path d="M14 8l10-1v2l-10 8z" fill="#0f4fa0" /><rect y="5.500" width="14" height="14" rx="1.500" fill="#0f6cd0" /><circle cx="7" cy="12.500" r="3.300" stroke="#fff" strokeWidth="2" /></Svg>
);
const IntelliJ = () => (
  <Svg $w={24} viewBox="0 0 24 24">
    <defs><linearGradient id="ij" x1="1" y1="0" x2="0" y2="1"><stop stopColor="#ff2d55" /><stop offset=".25" stopColor="#e0359a" /><stop offset=".48" stopColor="#5b5bf0" /><stop offset="1" stopColor="#0a84ff" /></linearGradient></defs>
    <path d="M5 2.500L8 0h13q3 0 3 3v12l-5 7-3 2H2q-2 0-2-2v-8z" fill="url(#ij)" /><rect x="4.800" y="4.500" width="14.500" height="14.500" fill="#000" /><LogoText $s={8} x="6.500" y="12">IJ</LogoText><path d="M7 16.300h5" stroke="#fff" strokeWidth="1.200" strokeLinecap="butt" />
  </Svg>
);
const MySQL = () => (
  <Svg $w={24} viewBox="0 0 24 24"><rect width="24" height="24" rx="2.500" fill="#2b5f88" /><path d="M0 13h24v8.500q0 2.500-2.500 2.500h-19Q0 24 0 21.500z" fill="#20496d" /><path d="M5.500 15.500Q4 13 4.500 10.500 2.500 5.500 4 4q5-.5 8 4.500 2 3 3 5.500l4.500 2 .5 2 2 2.500M5.500 15.500L8 12M14 15l2 2.500 2-.5M17 2.500l1.500 2.500 3.500 1" stroke="#dbe9f3" strokeWidth="1" /></Svg>
);
const ChromeLogo = () => (
  <Svg $w={24} viewBox="0 0 24 24"><circle cx="12" cy="12" r="12" fill="#fcc934" /><path d="M1.600 6A12 12 0 0 1 22.400 6H12a6 6 0 0 0-5.200 3z" fill="#ea4335" /><path d="M1.600 6A12 12 0 0 0 12 24l5.200-9a6 6 0 0 1-10.400 0z" fill="#2a9d4e" /><circle cx="12" cy="12" r="6" fill="#fff" /><circle cx="12" cy="12" r="4.600" fill="#3b7ded" /></Svg>
);
const Snip = () => (
  <Svg $w={24} viewBox="0 0 24 24"><rect width="18" height="18" rx="2" fill="#f3f1f0" /><path d="M3.500 13.500v-10h10" stroke="#d83b01" strokeWidth="3" strokeDasharray="2.600 1" strokeLinecap="butt" /><path d="M14.500 5v12M5 14.500h12" stroke="#98a2a8" strokeWidth="1.800" /><circle cx="21.500" cy="13.500" r="2.200" stroke="#1ba1e2" strokeWidth="1.600" /><circle cx="13.500" cy="21.500" r="2.200" stroke="#1ba1e2" strokeWidth="1.600" /><path d="M14.500 14.500l-.5 5M14.500 14.500l5-.5" stroke="#7d8a92" strokeWidth="1.600" /></Svg>
);
const VSCode = () => (
  <Svg $w={24} viewBox="0 0 24 24"><path d="M17.500 0v6.500L3 18 0 15.500z" fill="#0d6fb8" /><path d="M17.500 24v-6.500L3 6 0 8.500z" fill="#1a8ad6" /><path d="M17.500 0L24 3v18l-6.500 3z" fill="#2aa9f0" /></Svg>
);

function TaskbarView() {
  return (
    <Taskbar>
      <Weather>
        <WeatherIcon>
          <Svg $w={24} $h={17} viewBox="0 0 24 17">
            <defs><linearGradient id="cl" x2="0" y2="1"><stop stopColor="#a9c6f5" /><stop offset="1" stopColor="#dbe8fd" /></linearGradient></defs>
            <circle cx="19" cy="5" r="4" fill="#f5a623" /><path d="M6 16.500q-5 0-5.500-4.500Q.6 8.500 4.600 7.500 5.500 1.500 11.500 1.300q5.500 0 7 5.200 5 .3 5.200 5-.2 5-5.200 5z" fill="url(#cl)" />
          </Svg>
          <Count>5</Count>
        </WeatherIcon>
        <TwoLines $sub="#c4c6c7" $ls={-0.28}><span>21°C</span><small>Pred. nublado</small></TwoLines>
      </Weather>
      <Pins>
        <StartPin><WindowsLogo /></StartPin>
        <SearchBox>
          <Svg $w={15} $c="#e4e4e4" $sw={1.9} viewBox="0 0 15 15"><circle cx="6.300" cy="6.300" r="5.300" /><path d="M10.300 10.300L14 14" /></Svg>
          Pesquisar
          <Spacer />
          <Scene />
        </SearchBox>
        <Pin><TaskView /></Pin>
        <Pin><Copilot w={22} id="tc" /></Pin>
        <Pin $open><Explorer /></Pin>
        <Pin $open><EdgeLogo /></Pin>
        <Pin><Store /></Pin>
        <Pin><Outlook /></Pin>
        <Pin $open><IntelliJ /></Pin>
        <Pin $open><MySQL /></Pin>
        <Pin $open $active><ChromeLogo /></Pin>
        <Pin $open><Snip /></Pin>
        <Pin $open><VSCode /></Pin>
      </Pins>
      <Tray>
        <Slot $w={32}><Svg $w={10} $h={6} $c="#fff" $sw={1.5} viewBox="0 0 10 6"><path d="M.5 5.300L5 .8l4.500 4.500" /></Svg></Slot>
        <Slot $w={32}><Svg $w={16} $h={13} viewBox="0 0 16 13"><path d="M4 11.500Q.4 11.500.4 8.300.6 5.400 3.500 5.300 4.500 1.500 8 1.500t4.500 3.800q3 .2 3.100 3.100-.1 3.100-3.600 3.100z" fill="#8f9194" /><path d="M2 .8l12 11.700" stroke="#1f2428" strokeWidth="2.600" /><path d="M2.600.6l12 11.700" stroke="#eee" strokeWidth="1.100" /></Svg></Slot>
        <Slot $w={32}><Svg $w={16} $h={13} $c="#fff" $sw={1.2} viewBox="0 0 16 13"><path d="M.7 4.700Q8-2.700 15.300 4.700M2.900 7.200q5.100-5 10.200 0M5.200 9.500q2.800-2.600 5.600 0" /><circle cx="8" cy="11.400" r="1" fill="#fff" /></Svg></Slot>
        <Slot $w={16}><Svg $w={16} $h={14} $c="#fff" viewBox="0 0 16 14"><path d="M.6 5v4h2.600L7 12.400V1.600L3.200 5zM9.300 4.800q1.600 2.200 0 4.400M11.300 3q3 4 0 8M13.300 1.300q4.200 5.700 0 11.400" /></Svg></Slot>
        <Slot $w={32}><Svg $w={16} $h={13} $c="#fff" $sw={1.2} viewBox="0 0 16 13"><path d="M6 3h6.500q1.500 0 1.500 1.500v6q0 1.500-1.500 1.500H2.500Q1 12 1 10.500V8.500M14.300 6h1.400v3h-1.400" /><path d="M3.600.2L.7 4.600h2L1.700 8 5 3.500H3z" fill="#fff" stroke="none" /></Svg></Slot>
        <Gap $w={10} />
        <TwoLines $align="right" $ls={-0.22}><span>15:22</span><small>10/06/2025</small></TwoLines>
      </Tray>
    </Taskbar>
  );
}

export default function App() {
  return (
    <Desktop>
      <Global />
      <Windows>
        <ChromeWindow />
        <InPrivateWindow />
        <EdgeWindow />
      </Windows>
      <TaskbarView />
    </Desktop>
  );
}
